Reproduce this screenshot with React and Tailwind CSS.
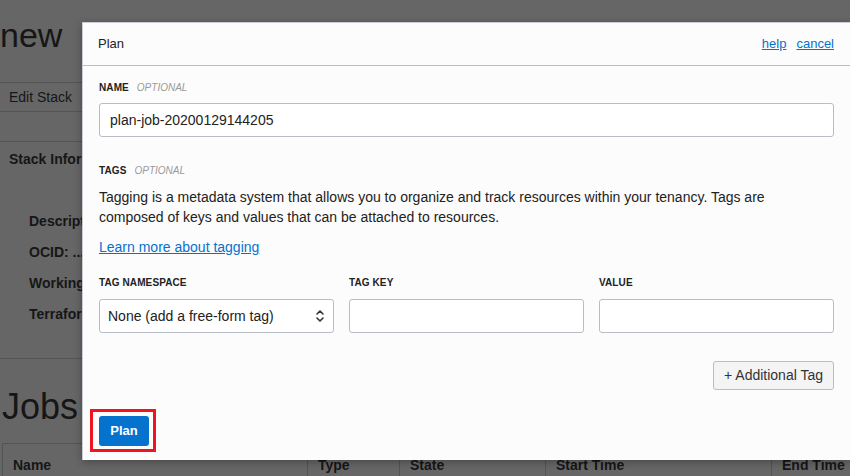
import { useState } from 'react';

const SelectChevrons = () => (
  <svg width="10" height="14" viewBox="0 0 10 14" fill="none" stroke="#333" strokeWidth="1.6" strokeLinecap="round" strokeLinejoin="round">
    <path d="M2 5 L5 2 L8 5" />
    <path d="M2 9 L5 12 L8 9" />
  </svg>
);

const FieldLabel = ({ children, optional }) => (
  <div className="flex items-center h-[12px] text-[10px] leading-[12px]">
    <span className="font-bold text-[#222] tracking-[0.1px]">{children}</span>
    {optional && <span className="ml-[8px] italic text-[#9a9a9a] font-light">OPTIONAL</span>}
  </div>
);

const TextBox = ({ value, onChange }) => (
  <input
    value={value}
    onChange={onChange}
    className="w-full h-[34px] bg-white border border-[#b8bcc4] rounded-[3px] px-[10px] text-[14px] text-[#222] outline-none"
  />
);

// page behind the overlay (only the strip left of the dialog shows)
const BackgroundPage = () => {
  const details = ['Description:', 'OCID: ...', 'Working Directory:', 'Terraform Version:'];
  const columns = [
    { label: 'Name', w: 'w-[304px]' },
    { label: 'Type', w: 'w-[92px]' },
    { label: 'State', w: 'w-[146px]' },
    { label: 'Start Time', w: 'w-[226px]' },
    { label: 'End Time', w: 'flex-1' },
  ];

  return (
    <div className="text-[#161616]">
      <div className="h-[83px] border-b border-[#545454] pt-[18px]">
        <div className="w-[80px] overflow-hidden text-[34px] leading-[34px] whitespace-nowrap">new</div>
      </div>
      <div className="h-[29px] border-b border-[#545454] flex items-center pl-[9px] text-[14px]">
        <div className="w-[73px] overflow-hidden whitespace-nowrap">Edit Stack</div>
      </div>
      <div className="h-[30px] border-b border-[#545454]" />
      <div className="h-[217px] border-b border-[#545454] pt-[9px] pl-[9px]">
        <div className="w-[73px] overflow-hidden text-[14px] leading-[16px] font-bold whitespace-nowrap">Stack Information</div>
        <div className="mt-[46px] pl-[20px] flex flex-col gap-[15px]">
          {details.map(d => (
            <div key={d} className="w-[53px] overflow-hidden text-[14px] leading-[16px] font-bold whitespace-nowrap">{d}</div>
          ))}
        </div>
      </div>
      <div className="pt-[30px] pl-[2px] text-[36px] leading-[36px]">Jobs</div>
      <div className="mt-[18px] ml-[2px] border-t border-l border-[#545454] flex h-[44px]">
        {columns.map((c, i) => (
          <div
            key={c.label}
            className={`${c.w} pl-[10px] pt-[13px] text-[14px] leading-[16px] font-bold whitespace-nowrap ${i > 0 ? 'border-l border-[#545454]' : ''}`}
          >
            {c.label}
          </div>
        ))}
      </div>
    </div>
  );
};

export default function App() {
  const [jobName, setJobName] = useState('plan-job-20200129144205');
  const [tagKey, setTagKey] = useState('');
  const [tagValue, setTagValue] = useState('');

  return (
    <div className="relative w-[850px] h-[476px] overflow-hidden bg-[#666666] font-['Liberation_Sans',Arial,sans-serif]">
      <BackgroundPage />

      {/* Plan dialog */}
      <div className="absolute left-[82px] right-0 top-[22px] h-[438px] bg-[#fcfcfc] border-t border-l border-[#c9ccd2] shadow-[0_2px_8px_rgba(0,0,0,0.3)] flex flex-col">
        <div className="h-[43px] shrink-0 border-b border-[#b8bcc4] flex items-center justify-between pl-[15px] pr-[16px]">
          <span className="text-[13px] text-[#222]">Plan</span>
          <div className="flex gap-[10px] text-[13px] text-[#0572ce]">
            <a href="#" className="underline">help</a>
            <a href="#" className="underline">cancel</a>
          </div>
        </div>

        <div className="flex-1 flex flex-col px-[16px] pt-[16px]">
          <FieldLabel optional>NAME</FieldLabel>
          <div className="mt-[9px]">
            <TextBox value={jobName} onChange={e => setJobName(e.target.value)} />
          </div>

          <div className="mt-[28px]">
            <FieldLabel optional>TAGS</FieldLabel>
          </div>
          <p className="mt-[10px] max-w-[695px] text-[14px] leading-[20px] text-[#222]">
            Tagging is a metadata system that allows you to organize and track resources within your tenancy. Tags are composed of keys and values that can be attached to resources.
          </p>
          <a href="#" className="mt-[10px] self-start text-[14px] leading-[20px] text-[#0572ce] underline">
            Learn more about tagging
          </a>

          <div className="mt-[20px] grid grid-cols-3 gap-x-[15px]">
            <div>
              <FieldLabel>TAG NAMESPACE</FieldLabel>
              <div className="mt-[10px] h-[34px] bg-white border border-[#b8bcc4] rounded-[3px] pl-[8px] pr-[8px] flex items-center justify-between text-[14px] text-[#222]">
                <span>None (add a free-form tag)</span>
                <SelectChevrons />
              </div>
            </div>
            <div>
              <FieldLabel>TAG KEY</FieldLabel>
              <div className="mt-[10px]">
                <TextBox value={tagKey} onChange={e => setTagKey(e.target.value)} />
              </div>
            </div>
            <div>
              <FieldLabel>VALUE</FieldLabel>
              <div className="mt-[10px]">
                <TextBox value={tagValue} onChange={e => setTagValue(e.target.value)} />
              </div>
            </div>
          </div>

          <div className="mt-[28px] flex justify-end">
            <button className="h-[29px] px-[10px] bg-[#f4f4f5] border border-[#b8bcc4] rounded-[3px] text-[14px] text-[#333]">
              + Additional Tag
            </button>
          </div>

          <div className="mt-[19px] ml-[-9px] self-start border-[3px] border-[#f0141e] pl-[6px] pr-[4px] pt-[4px] pb-[3px]">
            <button className="h-[30px] w-[50px] bg-[#0572ce] rounded-[3px] text-white text-[13px] font-bold">
              Plan
            </button>
          </div>
        </div>
      </div>
    </div>
  );
}
